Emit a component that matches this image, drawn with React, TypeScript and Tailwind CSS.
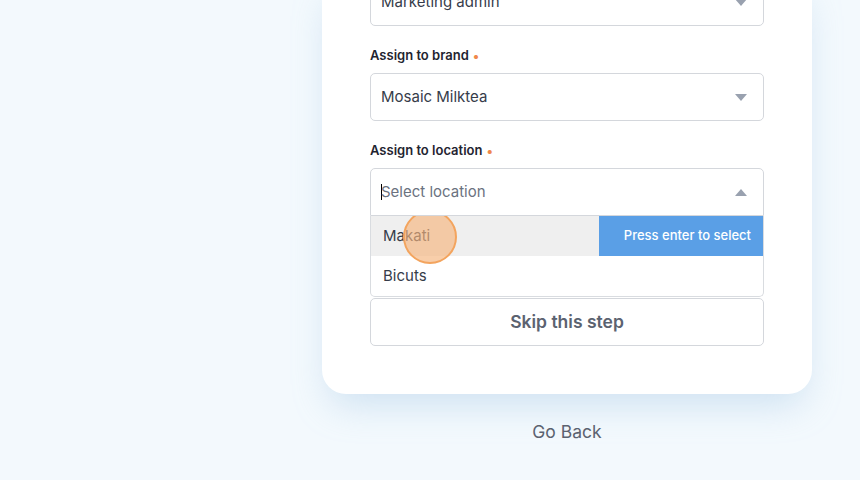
import React from 'react'

const font = { fontFamily: 'Inter, "Open Sans", "Noto Sans", sans-serif' }

const Caret: React.FC<{ up?: boolean }> = ({ up }) => (
  <svg width="12" height="7" viewBox="0 0 12 7" className="text-gray-400">
    {up ? <path d="M0 7 L6 0 L12 7 Z" fill="currentColor" /> : <path d="M0 0 L6 7 L12 0 Z" fill="currentColor" />}
  </svg>
)

const Label: React.FC<{ children: React.ReactNode }> = ({ children }) => (
  <label className="flex h-5 items-center gap-1 pt-[2px] text-[13px] font-semibold text-[#1f2430]">
    {children}
    <span className="text-[13px] leading-none text-[#f0884a]">•</span>
  </label>
)

const App: React.FC = () => {
  return (
    <div className="h-[480px] w-[860px] overflow-hidden bg-[#f3f9fd]" style={font}>
      <div className="flex flex-col pl-[322px]">
        {/* Card */}
        <div className="-mt-[22px] w-[490px] rounded-b-[24px] bg-white px-12 pb-12 shadow-[0_18px_36px_-8px_rgba(150,190,225,0.4)]">
          <div className="flex h-12 items-center justify-between rounded-[5px] border border-[#d4d7dc] pl-[10px] pr-4">
            <span className="text-[15px] text-[#363c4a]">Marketing admin</span>
            <Caret />
          </div>

          <div className="mt-[19px] flex flex-col gap-2">
            <Label>Assign to brand</Label>
            <div className="flex h-12 items-center justify-between rounded-[5px] border border-[#d4d7dc] pl-[10px] pr-4">
              <span className="text-[15px] text-[#363c4a]">Mosaic Milktea</span>
              <Caret />
            </div>
          </div>

          <div className="mt-[19px] flex flex-col gap-2">
            <Label>Assign to location</Label>
            <div className="relative">
              <div className="flex h-12 items-center justify-between rounded-t-[5px] border border-[#d4d7dc] pl-[10px] pr-4">
                <span className="flex items-center text-[15px] text-[#6b7280]">
                  <span className="mr-[-1px] h-4 w-px bg-black" />
                  Select location
                </span>
                <Caret up />
              </div>

              {/* Dropdown */}
              <div className="absolute left-0 right-0 top-full z-10 overflow-hidden rounded-b-[5px] border border-t-0 border-[#d9dce0] bg-white">
                <div className="relative flex h-10 items-center bg-[#efefef] text-[15px] text-[#363c4a]">
                  <span className="pl-3">Makati</span>
                  <span className="ml-auto flex h-10 w-[164px] items-center justify-end bg-[#5a9fe6] pr-3 text-[13px] font-medium text-white">
                    Press enter to select
                  </span>
                  <span className="absolute left-[32px] top-[-6px] h-[54px] w-[54px] rounded-full border-2 border-[#f3a45e] bg-[#f5b47d]/65" />
                </div>
                <div className="flex h-10 items-center pl-3 text-[15px] text-[#363c4a]">Bicuts</div>
              </div>
            </div>
          </div>

          <button className="mt-6 h-12 w-full rounded-[5px] bg-[#5a9fe6] text-[17px] font-semibold text-white">
            Continue
          </button>
          <button className="mt-[10px] h-12 w-full rounded-[5px] border border-[#d4d7dc] bg-white text-[17.5px] font-semibold text-[#5b6270]">
            Skip this step
          </button>
        </div>

        <div className="mt-[25px] w-[490px] text-center text-[17.5px] text-[#5b6270]">Go Back</div>
      </div>
    </div>
  )
}

export default App
